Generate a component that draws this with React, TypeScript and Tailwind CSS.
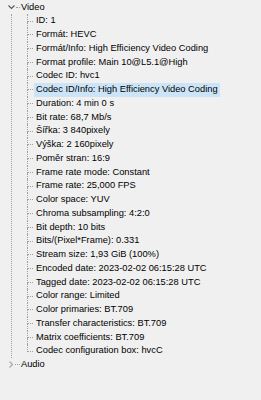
const items = [
  'ID: 1',
  'Formát: HEVC',
  'Formát/Info: High Efficiency Video Coding',
  'Format profile: Main 10@L5.1@High',
  'Codec ID: hvc1',
  'Codec ID/Info: High Efficiency Video Coding',
  'Duration: 4 min 0 s',
  'Bit rate: 68,7 Mb/s',
  'Šířka: 3 840pixely',
  'Výška: 2 160pixely',
  'Poměr stran: 16:9',
  'Frame rate mode: Constant',
  'Frame rate: 25,000 FPS',
  'Color space: YUV',
  'Chroma subsampling: 4:2:0',
  'Bit depth: 10 bits',
  'Bits/(Pixel*Frame): 0.331',
  'Stream size: 1,93 GiB (100%)',
  'Encoded date: 2023-02-02 06:15:28 UTC',
  'Tagged date: 2023-02-02 06:15:28 UTC',
  'Color range: Limited',
  'Color primaries: BT.709',
  'Transfer characteristics: BT.709',
  'Matrix coefficients: BT.709',
  'Codec configuration box: hvcC',
];

const line = 'border-dotted border-[#a0a0a0]';

function ChildRow({ text, last, selected }: { text: string; last: boolean; selected: boolean }) {
  return (
    <div className="flex h-[13.75px] items-stretch pl-[15px]">
      {/* connector: vertical line + dash */}
      <div className="flex w-[6px] flex-col">
        <div className={`flex-1 border-b border-l ${line}`} />
        <div className={`flex-1 ${last ? '' : `border-l ${line}`}`} />
      </div>
      <div className="flex items-center">
        <span
          className={`ml-px whitespace-nowrap px-[2px] leading-[13.75px] ${selected ? 'bg-[#cce4f7]' : ''}`}
        >
          {text}
        </span>
      </div>
    </div>
  );
}

export default function App() {
  return (
    <div className="h-[400px] w-[261px] overflow-hidden bg-[#f0f0f0] pt-[0.5px] font-['Liberation_Sans',Arial,sans-serif] text-[9.3px] text-black">
      {/* Video node */}
      <div className="flex h-[13.75px] items-center pl-[8px]">
        <svg width="7" height="5" viewBox="0 0 7 5">
          <path d="M0.5 0.5 L3.5 3.5 L6.5 0.5" fill="none" stroke="#555" strokeWidth="1.1" />
        </svg>
        <span className={`ml-px w-[4px] border-t ${line}`} />
        <span className="ml-px leading-[13.75px]">Video</span>
      </div>

      <div className={`ml-[11px] border-l ${line}`}>
        {items.map((t, i) => (
          <ChildRow key={t} text={t} last={i === items.length - 1} selected={i === 5} />
        ))}
      </div>

      {/* Audio node */}
      <div className="flex h-[13.75px] items-center pl-[9px]">
        <svg width="5" height="7" viewBox="0 0 5 7">
          <path d="M0.5 0.5 L3.5 3.5 L0.5 6.5" fill="none" stroke="#a6a6a6" strokeWidth="1.1" />
        </svg>
        <span className={`ml-px w-[5px] border-t ${line}`} />
        <span className="ml-px leading-[13.75px]">Audio</span>
      </div>
    </div>
  );
}
